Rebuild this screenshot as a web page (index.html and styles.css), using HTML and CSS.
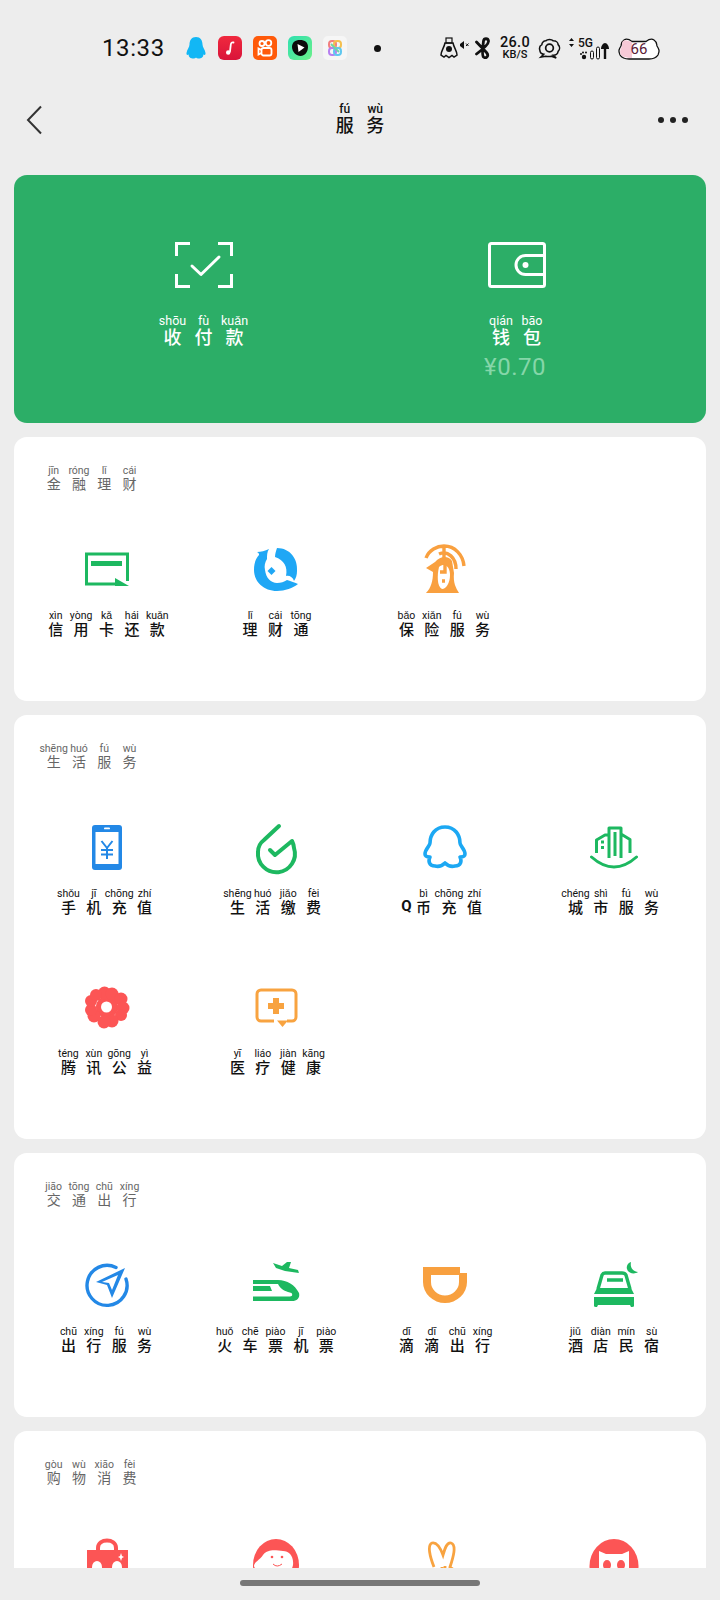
FILE: index.html
```html
<!DOCTYPE html>
<html lang="zh-CN">
<head>
<meta charset="utf-8">
<title>服务</title>
<link rel="stylesheet" href="styles.css">
</head>
<body>
<div class="screen">
  <header class="status">
    <span class="time">13:33</span>
    <svg class="s-qq" viewBox="0 0 20 22"><path fill="#12b7f5" d="M10 0C5.500 0 3.500 3.500 3.500 7.500C3.500 10 1 12.500 .5 16c-.3 2 1 2.500 2.200 1.500-.2 2 .8 3.500 3.800 4 1.500.2 2.800-.2 3.500-1 .7.800 2 1.200 3.500 1 3-.5 4-2 3.800-4 1.200 1 2.500.5 2.200-1.500-.5-3.500-3-6-3-8.500C16.500 3.500 14.500 0 10 0z"/></svg>
    <svg class="s-app s-music" viewBox="0 0 24 24"><defs><linearGradient id="m" x1="0" y1="0" x2="0" y2="1"><stop offset="0" stop-color="#f0293e"/><stop offset="1" stop-color="#d9143a"/></linearGradient></defs><rect width="24" height="24" rx="6" fill="url(#m)"/><path d="M15.500 6.500c-2-.3-2.500.5-2.700 2l-.8 7" fill="none" stroke="#fff" stroke-width="1.800" stroke-linecap="round"/><circle cx="10.200" cy="16.500" r="2.200" fill="#fff"/></svg>
    <svg class="s-app s-kuai" viewBox="0 0 24 24"><rect width="24" height="24" rx="5" fill="#ff5a0a"/><g fill="none" stroke="#fff" stroke-width="1.800"><circle cx="9" cy="7.500" r="2.500"/><circle cx="15.500" cy="7" r="2.800"/><rect x="8.500" y="12" width="10" height="7.500" rx="2"/><path d="M8.500 14l-3-1.500v6l3-1.500"/></g></svg>
    <svg class="s-app s-play" viewBox="0 0 24 24"><defs><linearGradient id="p" x1="0" y1="0" x2="1" y2="1"><stop offset="0" stop-color="#2fe0b0"/><stop offset="1" stop-color="#6cf08a"/></linearGradient></defs><rect width="24" height="24" rx="6" fill="url(#p)"/><path d="M12 4c5 0 8 2.500 8 7 0 5-3.500 9-7.500 9S4 16 4 11c0-4.500 3-7 8-7z" fill="#0b0b0b"/><path d="M9.500 8l7 3.500-6 4.500z" fill="#fff"/></svg>
    <svg class="s-app s-color" viewBox="0 0 24 24"><rect width="24" height="24" rx="5" fill="#f6f6f6"/><g fill="none" stroke-width="2"><rect x="6" y="5" width="7" height="7" rx="3" stroke="#f27f7f"/><rect x="11" y="5" width="7" height="7" rx="3" stroke="#f5c04f"/><rect x="6" y="12" width="7" height="7" rx="3" stroke="#b77ff0"/><rect x="11" y="12" width="7" height="7" rx="3" stroke="#5fc7ef"/><path d="M8 8l8 8" stroke="#6fd4a5"/></g></svg>
    <span class="s-dot"></span>
    <svg class="s-bell" viewBox="0 0 30 22"><path d="M5 6c-1 5-4 8-4 12l3 2 2-1.500 3 2 3-2 2 1.500 3-2c0-4-3-7-4-12z" fill="none" stroke="#111" stroke-width="1.500"/><rect x="6" y="1" width="6" height="5" fill="none" stroke="#111" stroke-width="1.200"/><circle cx="9" cy="12" r="3" fill="#111"/><path d="M20 7l4-3v8l-4-3z" fill="#111"/><path d="M26 6.500l2.500 2.500M28.500 6.500L26 9" stroke="#111"/></svg>
    <svg class="s-bt" viewBox="0 0 16 22"><path d="M1.500 5L11.500 15.500C14.500 19 11 22 8.500 20 6.500 18 8 8 8.500 4 9 1 13 1 13.500 4 14 7 8 12 1.500 17" fill="none" stroke="#111" stroke-width="2.800" stroke-linejoin="round" stroke-linecap="round"/></svg>
    <span class="s-speed"><b>26.0</b><i>KB/S</i></span>
    <svg class="s-gear" viewBox="0 0 24 24"><path d="M8 4c2-2 6-2 8 0 3 0 5 2 5 4 2 2 2 5 0 7-.5 3-3 4-5 4l3 3-5-2c-2 .5-4 .5-6 0l-5 1 3-3c-2-.5-4-2-4-4-1-3 0-5 2-6 0-2 2-4 4-4z" fill="none" stroke="#111" stroke-width="1.600"/><circle cx="12" cy="11.500" r="4" fill="none" stroke="#111" stroke-width="1.800"/></svg>
    <svg class="s-net" viewBox="0 0 40 24"><path d="M0 5l2.500-3L5 5zM0 8l2.500 3L5 8z" fill="#111"/><circle cx="15" cy="21" r="2.200" fill="#111"/><circle cx="12" cy="18" r="1" fill="#111"/><circle cx="14" cy="16.500" r="1" fill="#111"/><circle cx="17" cy="16.500" r="1" fill="#111"/><rect x="21.500" y="15" width="3" height="8" rx="1.500" fill="none" stroke="#111"/><rect x="27.500" y="11" width="3" height="12" rx="1.500" fill="none" stroke="#111"/><path d="M36 23V10" stroke="#111" stroke-width="2.400"/><path d="M32 13c0-3 2-6 4-6s4 3 4 6z" fill="#111"/></svg>
    <span class="s-5g">5G</span>
    <span class="s-batt">
      <svg viewBox="0 0 44 24"><path d="M7 4c3-2 6 0 8 1.500h14C31 4 34 2 37 4c3 2 2.500 4 3 6 2 3 3 5 1 9-2 3-6 4-9 4H12c-3 0-7-1-9-4-2-4-1-6 1-9 .5-2 0-4 3-6z" fill="#fff" stroke="#111" stroke-width="1.300"/><path d="M6 5c2-2 6 0 9 1v16c-4 0-8 0-11-3-2-4 0-6 1-9 0-2 0-4 1-5z" fill="#f6c9d6"/></svg>
      <span>66</span>
    </span>
  </header>

  <nav class="nav">
    <svg class="back" viewBox="0 0 16 30"><path d="M15 1.500L2 15l13 13.500" fill="none" stroke="#333" stroke-width="2"/></svg>
    <h1 class="word title"><ruby>服<rt>fú</rt></ruby><ruby>务<rt>wù</rt></ruby></h1>
    <span class="more"><i></i><i></i><i></i></span>
  </nav>

  <main class="content">
    <section class="hero">
      <a class="hero-item">
        <svg class="hero-icon" viewBox="0 0 58 46" fill="none" stroke="#fff" stroke-width="3"><path d="M15 1.500H1.500V14M43 1.500h13.500V14M15 44.500H1.500V32M43 44.500h13.500V32"/><path d="M17 24l9 8.500L44 15" stroke-linecap="round" stroke-linejoin="round"/></svg>
        <div class="word big"><ruby>收<rt>shōu</rt></ruby><ruby>付<rt>fù</rt></ruby><ruby>款<rt>kuǎn</rt></ruby></div>
      </a>
      <a class="hero-item">
        <svg class="hero-icon" viewBox="0 0 58 46" fill="none" stroke="#fff" stroke-width="3"><rect x="1.500" y="1.500" width="55" height="43" rx="2"/><path d="M56 13.500H37.500a9.500 9.500 0 0 0 0 19H56"/><circle cx="37.500" cy="23" r="3" fill="#fff" stroke="none"/></svg>
        <div class="word big"><ruby>钱<rt>qián</rt></ruby><ruby>包<rt>bāo</rt></ruby></div>
        <div class="balance">¥0.70</div>
      </a>
    </section>

    <section class="card">
      <h2 class="word head"><ruby>金<rt>jīn</rt></ruby><ruby>融<rt>róng</rt></ruby><ruby>理<rt>lǐ</rt></ruby><ruby>财<rt>cái</rt></ruby></h2>
      <div class="grid">
        <a class="item">
          <svg class="icon" viewBox="0 0 60 60"><path d="M38 45H9.500V15h41v27" fill="none" stroke="#1db860" stroke-width="3"/><rect x="14" y="22" width="31" height="5" fill="#1db860"/><path d="M38 39l14 8H38z" fill="#1db860"/></svg>
          <div class="word"><ruby>信<rt>xìn</rt></ruby><ruby>用<rt>yòng</rt></ruby><ruby>卡<rt>kǎ</rt></ruby><ruby>还<rt>hái</rt></ruby><ruby>款<rt>kuǎn</rt></ruby></div>
        </a>
        <a class="item">
          <svg class="icon" viewBox="0 0 60 60" fill="#1fa7f5"><path d="M31 9C44 9 52 20 51 32c0 4-1 7-3 10-1-4-5-6-8-5 2-9-2-16-11-19 0-3 1-6 2-9z"/><path d="M23 10c-2 3-2 6-2 10-2 3-3 7-2 11 1 8 6 13 12 13 4 0 7-1 10-3 3 1 7 2 11 4-5 4-13 7-21 7C18 52 8 43 8 31c0-7 2-12 5-15 0-1 0-2-2-3 4 0 8-1 12-3z"/><path d="M25.500 28l4 4-4 4-4-4z"/></svg>
          <div class="word"><ruby>理<rt>lǐ</rt></ruby><ruby>财<rt>cái</rt></ruby><ruby>通<rt>tōng</rt></ruby></div>
        </a>
        <a class="item">
          <svg class="icon" viewBox="0 0 60 60"><path d="M20 23l-9 6 7 4c0 9-2 16-7 21h33c-3-5-6-10-5-20l-2-12c-3-5-11-6-17 1z" fill="#f9a03f"/><path d="M24 28c6-5 11 0 11 8s-4 14-8 14c-5-2-5-14-3-22z" fill="#fff"/><path d="M11 19c3-8 11-12 18-12 11 0 19 9 20 20M24 15c9-4 17 4 17 15M29 8v11M30 24v9h-5M27 42h3" fill="none" stroke="#f9a03f" stroke-width="3.400"/></svg>
          <div class="word"><ruby>保<rt>bǎo</rt></ruby><ruby>险<rt>xiǎn</rt></ruby><ruby>服<rt>fú</rt></ruby><ruby>务<rt>wù</rt></ruby></div>
        </a>
      </div>
    </section>

    <section class="card">
      <h2 class="word head"><ruby>生<rt>shēng</rt></ruby><ruby>活<rt>huó</rt></ruby><ruby>服<rt>fú</rt></ruby><ruby>务<rt>wù</rt></ruby></h2>
      <div class="grid">
        <a class="item">
          <svg class="icon" viewBox="0 0 60 60"><rect x="15" y="8" width="30" height="45" rx="3" fill="#2388e6"/><rect x="18.500" y="15" width="23" height="32" fill="#fff"/><rect x="27" y="10.500" width="6" height="1.800" rx=".9" fill="#fff"/><path d="M24.500 24l5.500 7 5.500-7M30 31v11M24 33h12M24 37.500h12" fill="none" stroke="#2388e6" stroke-width="2"/></svg>
          <div class="word"><ruby>手<rt>shǒu</rt></ruby><ruby>机<rt>jī</rt></ruby><ruby>充<rt>chōng</rt></ruby><ruby>值<rt>zhí</rt></ruby></div>
        </a>
        <a class="item">
          <svg class="icon" viewBox="0 0 60 60"><path d="M33 9L18 23c-4 3-6 7-6 12a18.500 18.500 0 1 0 36-4c0-3-1-5-2-7L29 38l-5-5" fill="none" stroke="#1db860" stroke-width="4" stroke-linecap="round" stroke-linejoin="round"/></svg>
          <div class="word"><ruby>生<rt>shēng</rt></ruby><ruby>活<rt>huó</rt></ruby><ruby>缴<rt>jiǎo</rt></ruby><ruby>费<rt>fèi</rt></ruby></div>
        </a>
        <a class="item">
          <svg class="icon" viewBox="0 0 60 60"><path d="M30 10c-10 0-15 8-15 16 0 3-5 6-5 11 0 2 2 3 5 3-2 4-1 9 5 9 4 1 8-1 10-3 2 2 6 4 10 3 6 0 7-5 5-9 3 0 5-1 5-3 0-5-5-8-5-11 0-8-5-16-15-16z" fill="none" stroke="#1ca8f3" stroke-width="3.600" stroke-linejoin="round"/></svg>
          <div class="word"><span class="q">Q</span><ruby>币<rt>bì</rt></ruby><ruby>充<rt>chōng</rt></ruby><ruby>值<rt>zhí</rt></ruby></div>
        </a>
        <a class="item">
          <svg class="icon" viewBox="0 0 60 60" fill="none" stroke="#1db860" stroke-width="3" stroke-linejoin="round"><path d="M12.500 36V23l8.500-5h3M25 41V11h12v30M37 17l9 5.500V36M31 15v24"/><path d="M7.500 40Q30 60 52.500 40" stroke-linecap="round"/><path d="M17 25h3M17 30.500h3" stroke-width="3"/></svg>
          <div class="word"><ruby>城<rt>chéng</rt></ruby><ruby>市<rt>shì</rt></ruby><ruby>服<rt>fú</rt></ruby><ruby>务<rt>wù</rt></ruby></div>
        </a>
        <a class="item">
          <svg class="icon" viewBox="0 0 60 60"><g fill="#fc5555"><circle cx="30" cy="30" r="11"/><circle cx="27.500" cy="16" r="6.500"/><circle cx="35" cy="17" r="6.500"/><circle cx="44" cy="22" r="6.500"/><circle cx="46" cy="31" r="6.500"/><circle cx="44" cy="38" r="6"/><circle cx="35" cy="44" r="6.500"/><circle cx="27" cy="45" r="6.500"/><circle cx="17" cy="39" r="6.500"/><circle cx="14" cy="33" r="6"/><circle cx="14" cy="24" r="6"/><circle cx="19" cy="18" r="6"/></g><circle cx="29.500" cy="30" r="5.500" fill="#fff"/></svg>
          <div class="word"><ruby>腾<rt>téng</rt></ruby><ruby>讯<rt>xùn</rt></ruby><ruby>公<rt>gōng</rt></ruby><ruby>益<rt>yì</rt></ruby></div>
        </a>
        <a class="item">
          <svg class="icon" viewBox="0 0 60 60"><path d="M28 44H15a4 4 0 0 1-4-4V17a4 4 0 0 1 4-4h31a4 4 0 0 1 4 4v23a4 4 0 0 1-4 4h-5" fill="none" stroke="#f8a340" stroke-width="3"/><path d="M31 43.500h11l-5.500 6.500z" fill="#f8a340"/><path d="M27 21h6v5h5v6h-5v5h-6v-5h-5v-6h5z" fill="#f8a340"/></svg>
          <div class="word"><ruby>医<rt>yī</rt></ruby><ruby>疗<rt>liáo</rt></ruby><ruby>健<rt>jiàn</rt></ruby><ruby>康<rt>kāng</rt></ruby></div>
        </a>
      </div>
    </section>

    <section class="card">
      <h2 class="word head"><ruby>交<rt>jiāo</rt></ruby><ruby>通<rt>tōng</rt></ruby><ruby>出<rt>chū</rt></ruby><ruby>行<rt>xíng</rt></ruby></h2>
      <div class="grid">
        <a class="item">
          <svg class="icon" viewBox="0 0 60 60"><path d="M39 12.500A20 20 0 1 0 49 24" fill="none" stroke="#2388e6" stroke-width="3.400" stroke-linecap="round"/><path d="M48 13L19 27l11 3 5 13zM41 20L25 27l7 1 3 7z" fill="#2388e6" fill-rule="evenodd"/></svg>
          <div class="word"><ruby>出<rt>chū</rt></ruby><ruby>行<rt>xíng</rt></ruby><ruby>服<rt>fú</rt></ruby><ruby>务<rt>wù</rt></ruby></div>
        </a>
        <a class="item">
          <svg class="icon" viewBox="0 0 60 60" fill="#1db860"><path d="M7 25h25c9 0 17 5 21 13 1 4-1 8-7 8H7v-4.500h37c2 0 3-1.500 1.500-3.500-4-1-11-3-13.500-9H7z"/><path d="M7 31h17l2 5H7z"/><path d="M27 8l9 3 5-4h4l-2 6 9 2 1 3-14-2-9-3z"/></svg>
          <div class="word"><ruby>火<rt>huǒ</rt></ruby><ruby>车<rt>chē</rt></ruby><ruby>票<rt>piào</rt></ruby><ruby>机<rt>jī</rt></ruby><ruby>票<rt>piào</rt></ruby></div>
        </a>
        <a class="item">
          <svg class="icon" viewBox="0 0 60 60"><path d="M8 12h37v6h7v9a22 21 0 0 1-44 0zM16 20v7a14 13.500 0 0 0 28 0v-7z" fill="#f8a03f" fill-rule="evenodd"/></svg>
          <div class="word"><ruby>滴<rt>dī</rt></ruby><ruby>滴<rt>dī</rt></ruby><ruby>出<rt>chū</rt></ruby><ruby>行<rt>xíng</rt></ruby></div>
        </a>
        <a class="item">
          <svg class="icon" viewBox="0 0 60 60"><path d="M47 7c-1 5 1 9 7 10-4 3-10 1-11-3-1-3 1-6 4-7z" fill="#1db860"/><path d="M14 34l4-14q1-2 3-2h17q3 0 4 2l4 14M23 25h16" fill="none" stroke="#1db860" stroke-width="3.400"/><path d="M13 33h34l3 6H10zM10 42h40v9q0 1-2 1h-1l-1-2H14l-1 2h-1q-2 0-2-1z" fill="#1db860"/></svg>
          <div class="word"><ruby>酒<rt>jiǔ</rt></ruby><ruby>店<rt>diàn</rt></ruby><ruby>民<rt>mín</rt></ruby><ruby>宿<rt>sù</rt></ruby></div>
        </a>
      </div>
    </section>

    <section class="card">
      <h2 class="word head"><ruby>购<rt>gòu</rt></ruby><ruby>物<rt>wù</rt></ruby><ruby>消<rt>xiāo</rt></ruby><ruby>费<rt>fèi</rt></ruby></h2>
      <div class="grid">
        <a class="item">
          <svg class="icon" viewBox="0 0 60 60"><path d="M21 18v-3c0-10 18-10 18 0v3" fill="none" stroke="#fc5555" stroke-width="4"/><rect x="10" y="17" width="41" height="37" fill="#fc5555"/><ellipse cx="20" cy="34" rx="5" ry="6" fill="#fff"/><ellipse cx="40" cy="34" rx="5" ry="6" fill="#fff"/><path d="M44 20l1 3 2 1-2 1-1 3-1-3-2-1 2-1z" fill="#fff"/></svg>
        </a>
        <a class="item">
          <svg class="icon" viewBox="0 0 60 60"><ellipse cx="30" cy="32" rx="23" ry="26" fill="#fc5555"/><path d="M17 22c6-7 14-4 20-4 6 0 11 5 10 14-1 7-8 10-14 9-5 0-8-3-12-5-5 1-13 1-13-3 0-4 6-6 9-11z" fill="#fff"/><circle cx="26" cy="24" r="1.300" fill="#fc5555"/><circle cx="36" cy="24" r="1.300" fill="#fc5555"/><path d="M27 31q4 4 9 0" fill="none" stroke="#fc5555"/></svg>
        </a>
        <a class="item">
          <svg class="icon" viewBox="0 0 60 60" fill="none" stroke="#f8a340" stroke-width="2.800"><path d="M19 34c-4-10-7-22-2-24 4-1 8 4 11 12 2-7 4-13 8-12 6 2 2 15-1 24l12 9"/><path d="M27 34v4M30 33v4"/></svg>
        </a>
        <a class="item">
          <svg class="icon" viewBox="0 0 60 60"><ellipse cx="30" cy="33" rx="24.500" ry="27" fill="#fc5555"/><path d="M15 18l7 3h16l7-3v18c0 8-7 12-15 12s-15-4-15-12z" fill="#fff"/><ellipse cx="23" cy="32" rx="4" ry="5" fill="#fc5555"/><ellipse cx="37" cy="32" rx="4" ry="5" fill="#fc5555"/></svg>
        </a>
      </div>
    </section>
  </main>

  <footer class="home"><span></span></footer>
</div>
</body>
</html>
```

FILE: styles.css
```css
* { box-sizing: border-box; }
html, body { margin: 0; padding: 0; }
body { background: #ededed; font-family: Roboto, "Noto Sans CJK SC", sans-serif; color: #111; }
.screen { width: 720px; height: 1600px; display: flex; flex-direction: column; overflow: hidden; background: #ededed; }

/* status bar */
.status { height: 80px; flex: none; padding: 16px 0 0 102px; display: flex; align-items: center; }
.time { font: 400 24px/24px Roboto, sans-serif; letter-spacing: .6px; width: 84px; color: #111; }
.s-qq { width: 20px; height: 22px; }
.s-app { width: 24px; height: 24px; margin-left: 12px; }
.s-kuai, .s-play, .s-color { margin-left: 11px; }
.s-dot { width: 7px; height: 7px; border-radius: 50%; background: #111; margin-left: 27px; }
.s-bell { width: 30px; height: 22px; margin-left: 59px; }
.s-bt { width: 16px; height: 22px; margin-left: 5px; }
.s-speed { width: 32px; margin-left: 8px; display: flex; flex-direction: column; gap: 1px; align-items: center; font-family: Roboto, sans-serif; color: #111; }
.s-speed b { font-weight: 500; font-size: 14.500px; line-height: 13px; letter-spacing: .3px; }
.s-speed i { font-style: normal; font-weight: 500; font-size: 11px; line-height: 10px; }
.s-gear { width: 23px; height: 23px; margin-left: 7px; }
.s-net { width: 40px; height: 24px; margin-left: 8px; }
.s-5g { font: 500 12px/12px Roboto, sans-serif; margin: -11px 0 0 -31px; width: 20px; }
.s-batt { position: relative; width: 44px; height: 24px; margin-left: 19px; }
.s-batt svg { width: 44px; height: 24px; display: block; }
.s-batt span { position: absolute; inset: 2px 0 0 0; text-align: center; font: 400 15px/22px Roboto, sans-serif; color: #5b2036; }

/* nav */
.nav { height: 95px; flex: none; padding: 0 26px 16px; display: grid; grid-template-columns: 1fr auto 1fr; align-items: center; }
.back { width: 16px; height: 30px; }
.more { display: flex; gap: 6px; justify-self: end; margin-right: 6px; }
.more i { width: 6px; height: 6px; border-radius: 50%; background: #222; }

/* pinyin words */
.word { display: flex; margin: 0; justify-content: center; font-weight: 500; font-size: 15px; }
ruby { display: flex; flex-direction: column-reverse; align-items: center; width: 25.400px; line-height: 18px; color: #111; }
rt { display: block; font: 400 10.500px/11px Roboto, sans-serif; white-space: nowrap; text-align: center; }
.q { width: 9px; align-self: flex-end; font: 700 15px/21px Roboto, sans-serif; display: flex; justify-content: center; }
.title { font-size: 18px; }
.title ruby { width: 30.500px; line-height: 22px; }
.title rt { font-size: 12px; font-weight: 500; line-height: 12px; }
.big { font-size: 18px; }
.big ruby { width: 31px; line-height: 22px; color: #fff; }
.big rt { font-size: 12.500px; line-height: 12px; }
.head { justify-content: flex-start; font-weight: 400; font-size: 14px; }
.head ruby { width: 25.300px; line-height: 16px; color: #666; }
.head rt { line-height: 11px; }

/* content */
.content { flex: 1; min-height: 0; overflow: hidden; padding: 0 14px; display: flex; flex-direction: column; gap: 14px; }
.hero { flex: none; height: 248px; border-radius: 13px; background: #2cae67; padding: 67px 33px 0; display: grid; grid-template-columns: 1fr 1fr; align-content: start; }
.hero-item { display: flex; flex-direction: column; align-items: center; }
.hero-icon { width: 58px; height: 46px; margin-bottom: 27px; }
.balance { font: 400 24px/28px Roboto, sans-serif; letter-spacing: .5px; color: #86d6a9; margin: 4px 3px 0 0; }

.card { flex: none; background: #fff; border-radius: 13px; padding: 28px 8px 50px; }
.card .head { padding-left: 19px; height: 74px; align-items: flex-start; }
.grid { display: grid; grid-template-columns: repeat(4, 169px); grid-auto-rows: 112px; row-gap: 48px; }
.item { display: flex; flex-direction: column; align-items: center; gap: 11px; }
.icon { width: 60px; height: 60px; flex: none; }

/* home indicator */
.home { height: 32px; flex: none; background: #ededed; display: flex; justify-content: center; padding-top: 12px; }
.home span { width: 240px; height: 6px; border-radius: 3px; background: #777; }
```
